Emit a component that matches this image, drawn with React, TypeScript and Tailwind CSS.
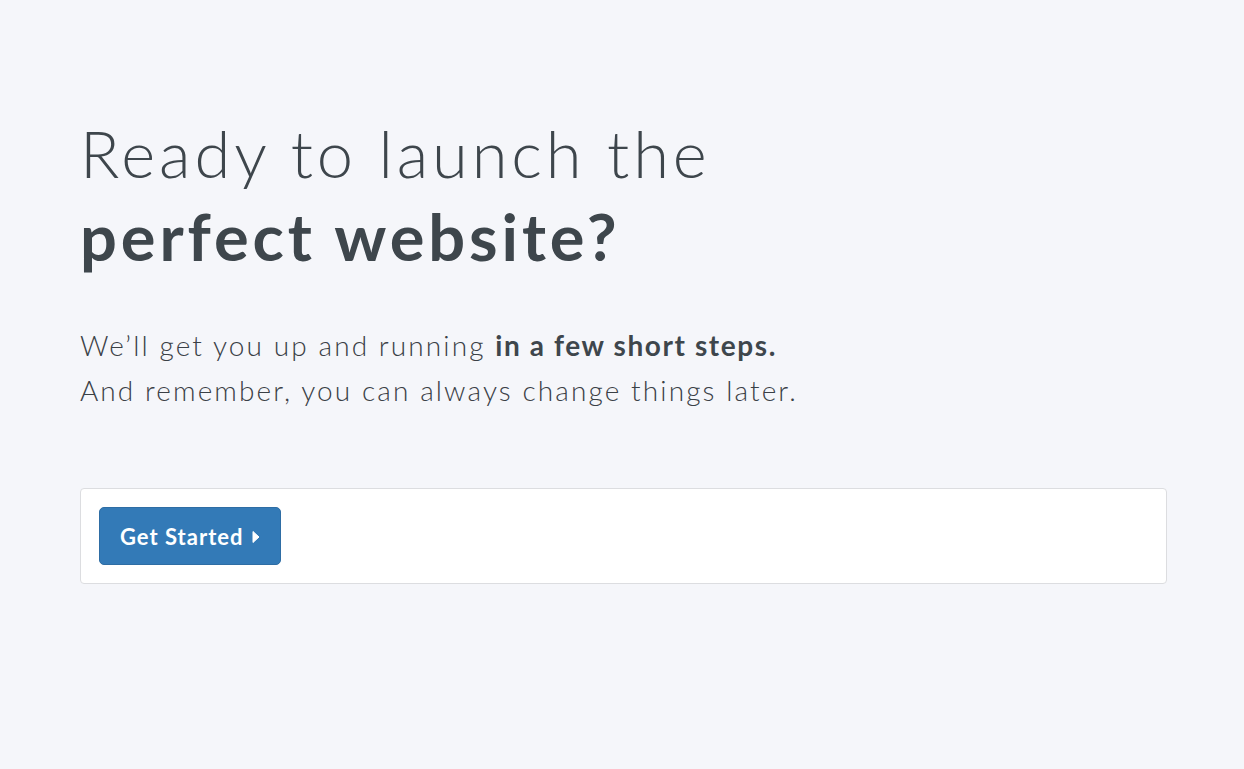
import React from 'react';

const CaretRight: React.FC = () => (
    <svg width="8" height="14" viewBox="0 0 8 14" className="ml-[9px] mt-[1px]" aria-hidden="true">
        <path d="M1 1.5 L7 7 L1 12.5 Z" fill="currentColor" stroke="currentColor" strokeWidth="1" strokeLinejoin="round" />
    </svg>
);

const App: React.FC = () => {
    return (
        <div className="min-h-screen bg-[#f5f6fa] text-[#3e464c] font-['Lato','Noto_Sans',sans-serif]">
            <div className="px-[80px] pt-[112px]">
                <h1 className="text-[65px] leading-[83px] font-light tracking-[3.9px]">
                    Ready to launch the
                    <br />
                    <span className="font-bold tracking-[3.9px]">perfect website?</span>
                </h1>
                <p className="mt-[45px] text-[28px] leading-[45px] font-light tracking-[2.1px] text-[#3a4046]">
                    We’ll get you up and running <span className="font-bold text-[#3e464c] tracking-[1.6px]">in a few short steps.</span>
                    <br />
                    And remember, you can always change things later.
                </p>
                <div className="mt-[75px] w-[1087px] bg-white border border-[#dcdde0] rounded-[4px] p-[18px]">
                    <button
                        type="button"
                        className="flex items-center h-[58px] px-[20px] bg-[#337ab7] border border-[#2e6da4] rounded-[5px] text-white text-[22px] font-bold tracking-[1px]"
                    >
                        Get Started
                        <CaretRight />
                    </button>
                </div>
            </div>
        </div>
    );
};

export default App;
